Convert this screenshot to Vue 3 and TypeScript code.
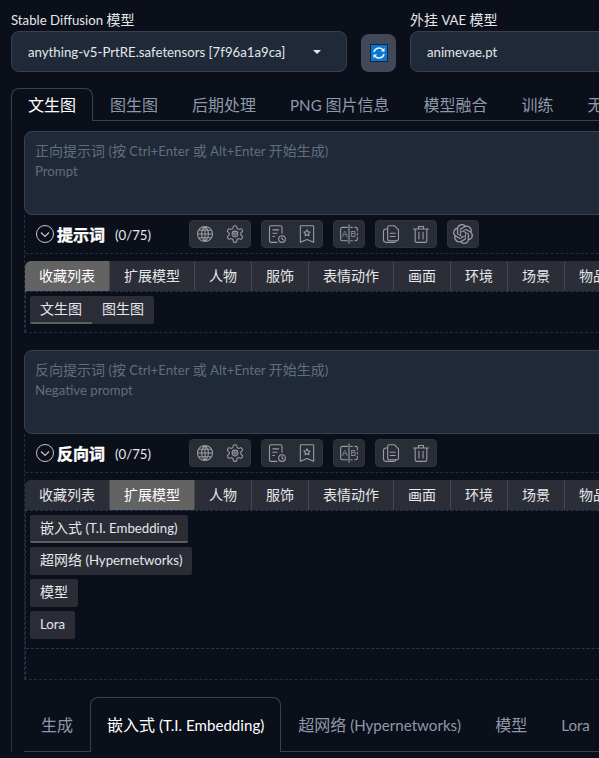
<template>
  <div class="page">
    <div class="top">
      <div class="field model">
        <label><Txt t="Stable Diffusion 模型" /></label>
        <div class="select">
          <span><Txt t="anything-v5-PrtRE.safetensors [7f96a1a9ca]" /></span>
          <i class="caret"></i>
        </div>
      </div>
      <button class="refresh">
        <svg width="18" height="18" viewBox="0 0 18 18">
          <rect x="0.5" y="0.5" width="17" height="17" fill="#0a77d6" stroke="#1b2430" />
          <path d="M4 8a5 5 0 0 1 8.6-2.4L14 7M14 10a5 5 0 0 1-8.6 2.4L4 11" fill="none" stroke="#e8f2fb" stroke-width="1.5" />
          <path d="M14.5 3.8v3.7h-3.7zM3.5 14.2v-3.7h3.7z" fill="#e8f2fb" />
        </svg>
      </button>
      <div class="field vae">
        <label><Txt t="外挂 VAE 模型" /></label>
        <div class="select"><span><Txt t="animevae.pt" /></span></div>
      </div>
    </div>

    <div class="main-tabs">
      <span v-for="(t, i) in mainTabs" :key="t" class="main-tab" :class="{ on: i === 0 }"><Txt :t="t" /></span>
    </div>

    <div class="panel">
      <section v-for="s in sections" :key="s.title" class="prompt">
        <div class="textbox">
          <p><Txt :t="s.hint" /></p>
          <p><Txt :t="s.placeholder" /></p>
        </div>
        <div class="extras">
          <div class="toolbar">
            <svg class="toggle" width="18" height="18" viewBox="0 0 18 18" fill="none" stroke="#c4c6ca" stroke-width="1">
              <circle cx="9" cy="9" r="8.5" />
              <path d="M5 7.5l4 4 4-4" stroke-width="1.2" />
            </svg>
            <strong>{{ s.title }}</strong>
            <span class="count"><Txt t="(0/75)" /></span>
            <div class="groups">
              <div v-for="(g, gi) in s.groups" :key="gi" class="group">
                <button v-for="name in g" :key="name" class="tool">
                  <svg width="20" height="20" viewBox="0 0 24 24" :fill="name === 'openai' ? '#9a9da3' : 'none'" :stroke="name === 'openai' ? 'none' : '#9a9da3'" stroke-width="1.3" stroke-linecap="round" stroke-linejoin="round">
                    <path :d="icons[name]" />
                    <template v-if="name === 'book'">
                      <text x="7" y="16" class="icon-letter">A</text>
                      <text x="17" y="16" class="icon-letter">B</text>
                    </template>
                  </svg>
                </button>
              </div>
            </div>
          </div>
          <div class="cats-wrap">
            <div class="cats">
              <span v-for="(c, i) in cats" :key="c" class="cat" :class="{ on: i === s.activeCat }">{{ c }}</span>
            </div>
            <div class="chips" :class="{ inline: s.inline, tall: !s.inline }">
              <span v-for="(c, i) in s.chips" :key="c" class="chip" :class="{ on: i === 0 }"><Txt :t="c" /></span>
              <div v-if="!s.inline" class="chip-end"></div>
            </div>
          </div>
        </div>
      </section>

      <div class="bottom-tabs">
        <span v-for="(t, i) in bottomTabs" :key="t" class="bottom-tab" :class="{ on: i === 1 }"><Txt :t="t" /></span>
      </div>
    </div>
  </div>
</template>

<script setup lang="ts">
import { h } from 'vue'

const Txt = (props: { t: string }) =>
  props.t.split(/([\x00-\x7f]+)/).filter(Boolean).map((run) =>
    /^[\x00-\x7f]/.test(run) ? h('span', { class: 'lat' }, run) : run,
  )
Txt.props = ['t']

const mainTabs = ['文生图', '图生图', '后期处理', 'PNG 图片信息', '模型融合', '训练', '无边界图像浏览']
const cats = ['收藏列表', '扩展模型', '人物', '服饰', '表情动作', '画面', '环境', '场景', '物品', '其他']
const bottomTabs = ['生成', '嵌入式 (T.I. Embedding)', '超网络 (Hypernetworks)', '模型', 'Lora']

const icons: Record<string, string> = {
  globe: 'M12 3a9 9 0 1 0 0 18a9 9 0 1 0 0-18M3 12h18M12 3c-5.400 4.500-5.400 13.500 0 18M12 3c5.400 4.500 5.400 13.500 0 18M12 3v18M4.300 7.500h15.400M4.300 16.500h15.400',
  gear: 'M12.22 2h-.44a2 2 0 0 0-2 2v.18a2 2 0 0 1-1 1.73l-.43.25a2 2 0 0 1-2 0l-.15-.08a2 2 0 0 0-2.73.73l-.22.38a2 2 0 0 0 .73 2.73l.15.1a2 2 0 0 1 1 1.72v.51a2 2 0 0 1-1 1.74l-.15.09a2 2 0 0 0-.73 2.73l.22.38a2 2 0 0 0 2.73.73l.15-.08a2 2 0 0 1 2 0l.43.25a2 2 0 0 1 1 1.73V20a2 2 0 0 0 2 2h.44a2 2 0 0 0 2-2v-.18a2 2 0 0 1 1-1.73l.43-.25a2 2 0 0 1 2 0l.15.08a2 2 0 0 0 2.73-.73l.22-.39a2 2 0 0 0-.73-2.73l-.15-.08a2 2 0 0 1-1-1.74v-.5a2 2 0 0 1 1-1.74l.15-.09a2 2 0 0 0 .73-2.73l-.22-.38a2 2 0 0 0-2.73-.73l-.15.08a2 2 0 0 1-2 0l-.43-.25a2 2 0 0 1-1-1.73V4a2 2 0 0 0-2-2zM12 8.500a3.500 3.500 0 1 0 0 7a3.500 3.500 0 1 0 0-7M12 10.500a1.500 1.500 0 1 0 0 3a1.500 1.500 0 1 0 0-3',
  history: 'M18 11V4a2 2 0 0 0-2-2H5a2 2 0 0 0-2 2v16a2 2 0 0 0 2 2h7M7 7h7M7 11h5M7 15h2M14 18a4 4 0 1 0 8 0a4 4 0 1 0-8 0M18 16v2l1.500 1',
  bookmark: 'M5 2h14a1 1 0 0 1 1 1v19l-8-3.500L4 22V3a1 1 0 0 1 1-1zM12 7l1.200 2.300 2.500.4-1.800 1.800.4 2.500-2.300-1.200-2.300 1.200.4-2.500-1.800-1.800 2.500-.4z',
  book: 'M12 1v22M10 4H4a2 2 0 0 0-2 2v12a2 2 0 0 0 2 2h6M14 4h2M19 4h1a2 2 0 0 1 2 2v2M22 11v2M22 16v2a2 2 0 0 1-2 2h-1M16 20h-2',
  paste: 'M10 2h6l5 5v11a2 2 0 0 1-2 2H10a2 2 0 0 1-2-2V4a2 2 0 0 1 2-2zM8 6H6a3 3 0 0 0-3 3v10a3 3 0 0 0 3 3h10a3 3 0 0 0 2-1M11 11h6M11 15h6',
  trash: 'M3 6h18M9 6V3h6v3M5 6v14a2 2 0 0 0 2 2h10a2 2 0 0 0 2-2V6M9.500 10v8M14.500 10v8',
  openai: 'M22.2819 9.8211a5.9847 5.9847 0 0 0-.5157-4.9108 6.0462 6.0462 0 0 0-6.5098-2.9A6.0651 6.0651 0 0 0 4.9807 4.1818a5.9847 5.9847 0 0 0-3.9977 2.9 6.0462 6.0462 0 0 0 .7427 7.0966 5.98 5.98 0 0 0 .511 4.9107 6.051 6.051 0 0 0 6.5146 2.9001A5.9847 5.9847 0 0 0 13.2599 24a6.0557 6.0557 0 0 0 5.7718-4.2058 5.9894 5.9894 0 0 0 3.9977-2.9001 6.0557 6.0557 0 0 0-.7475-7.0729zm-9.022 12.6081a4.4755 4.4755 0 0 1-2.8764-1.0408l.1419-.0804 4.7783-2.7582a.7948.7948 0 0 0 .3927-.6813v-6.7369l2.02 1.1686a.071.071 0 0 1 .038.052v5.5826a4.504 4.504 0 0 1-4.4945 4.4944zm-9.6607-4.1254a4.4708 4.4708 0 0 1-.5346-3.0137l.142.0852 4.783 2.7582a.7712.7712 0 0 0 .7806 0l5.8428-3.3685v2.3324a.0804.0804 0 0 1-.0332.0615L9.74 19.9502a4.4992 4.4992 0 0 1-6.1408-1.6464zM2.3408 7.8956a4.485 4.485 0 0 1 2.3655-1.9728V11.6a.7664.7664 0 0 0 .3879.6765l5.8144 3.3543-2.0201 1.1685a.0757.0757 0 0 1-.071 0l-4.8303-2.7865A4.504 4.504 0 0 1 2.3408 7.872zm16.5963 3.8558L13.1038 8.364 15.1192 7.2a.0757.0757 0 0 1 .071 0l4.8303 2.7913a4.4944 4.4944 0 0 1-.6765 8.1042v-5.6772a.79.79 0 0 0-.407-.667zm2.0107-3.0231l-.142-.0852-4.7735-2.7818a.7759.7759 0 0 0-.7854 0L9.409 9.2297V6.8974a.0662.0662 0 0 1 .0284-.0615l4.8303-2.7866a4.4992 4.4992 0 0 1 6.6802 4.66zM8.3065 12.863l-2.02-1.1638a.0804.0804 0 0 1-.038-.0567V6.0742a4.4992 4.4992 0 0 1 7.3757-3.4537l-.142.0805L8.704 5.459a.7948.7948 0 0 0-.3927.6813zm1.0976-2.3654l2.602-1.4998 2.6069 1.4998v2.9994l-2.5974 1.4997-2.6067-1.4997Z',
}

const baseGroups = [['globe', 'gear'], ['history', 'bookmark'], ['book'], ['paste', 'trash']]

const sections = [
  {
    title: '提示词',
    hint: '正向提示词 (按 Ctrl+Enter 或 Alt+Enter 开始生成)',
    placeholder: 'Prompt',
    groups: [...baseGroups, ['openai']],
    activeCat: 0,
    inline: true,
    chips: ['文生图', '图生图'],
  },
  {
    title: '反向词',
    hint: '反向提示词 (按 Ctrl+Enter 或 Alt+Enter 开始生成)',
    placeholder: 'Negative prompt',
    groups: baseGroups,
    activeCat: 1,
    inline: false,
    chips: ['嵌入式 (T.I. Embedding)', '超网络 (Hypernetworks)', '模型', 'Lora'],
  },
]
</script>

<style>
html, body { margin: 0; background: #0b0f19; }
.lat { font-size: 0.945em; }
</style>

<style scoped>
.page {
  width: 599px; height: 758px; overflow: hidden; background: #0b0f19; box-sizing: border-box;
  font-family: Lato, "Noto Sans CJK SC", sans-serif; font-size: 14px; color: #e5e7eb;
}
.top { display: flex; align-items: flex-end; gap: 14px; padding: 11px 0 0 11px; width: 900px; }
.field label { display: block; height: 20px; line-height: 18px; font-size: 14px; color: #e5e7eb; }
.model { width: 336px; flex: none; }
.vae { width: 336px; flex: none; }
.select {
  height: 41px; box-sizing: border-box; display: flex; align-items: center; justify-content: space-between;
  padding: 0 25px 0 16px; background: #1f2937; border: 1px solid #374151; border-radius: 8px; color: #e5e7eb;
}
.caret { width: 0; height: 0; border-left: 4px solid transparent; border-right: 4px solid transparent; border-top: 4px solid #e5e7eb; }
.refresh {
  width: 35px; height: 38px; flex: none; padding: 0; border: none; border-radius: 8px; background: #414958;
  display: flex; align-items: center; justify-content: center;
}

.main-tabs { display: flex; margin: 16px 0 0 11px; height: 32px; width: 900px; border-bottom: 1px solid #374151; }
.main-tab { box-sizing: border-box; padding: 0 16px; height: 33px; font-size: 16px; line-height: 32px; color: #8d99ab; white-space: nowrap; border: 1px solid transparent; border-bottom: none; }
.main-tab.on { color: #fff; background: #0b0f19; border-color: #374151; border-radius: 8px 8px 0 0; }

.panel { margin-left: 11px; border-left: 1px solid #2a303c; padding: 10px 0 0 12px; width: 900px; }
.prompt + .prompt { margin-top: 17px; }
.textbox {
  height: 84px; box-sizing: border-box; padding: 9px 10px; background: #1f2937; border: 1px solid #374151; border-radius: 8px;
  color: #616d80; line-height: 20px;
}
.textbox p { margin: 0; }
.extras { border-left: 1px dashed #1f2e40; border-bottom: 1px dashed #1f2e40; }
.toolbar { display: flex; align-items: center; padding: 5px 0 5px 11px; border-bottom: 1px dashed #1f2e40; }
.toggle { flex: none; }
.toolbar strong { margin-left: 3px; font-size: 16px; font-weight: 700; color: #fff; width: 48px; white-space: nowrap; -webkit-text-stroke: 0.4px #fff; }
.count { margin-left: 10px; width: 74px; flex: none; color: #e5e7eb; }
.groups { display: flex; gap: 10px; }
.group { display: flex; height: 28px; background: #292d36; border: 1px solid #2f333c; box-sizing: border-box; border-radius: 4px; }
.tool { width: 30px; padding: 0; border: none; background: none; display: flex; align-items: center; justify-content: center; }
.icon-letter { font: 10px "Liberation Sans", sans-serif; fill: #9a9da3; stroke: none; text-anchor: middle; }

.cats-wrap { padding-top: 7px; }
.cats { display: flex; height: 30px; }
.cat { flex: none; padding: 0 14px; line-height: 30px; background: #2b2e36; color: #e5e7eb; border-right: 1px solid #46484d; white-space: nowrap; }
.cat:first-child { border-radius: 6px 0 0 0; }
.cat.on { background: #636363; color: #fff; }

.chips { border-top: 1px dashed #1f3a52; border-left: 1px dashed #1f3a52; padding: 4px 4px 8px; display: flex; }
.chips.tall { flex-direction: column; align-items: flex-start; gap: 4px; padding-bottom: 0; }
.chip { height: 28px; box-sizing: border-box; padding: 0 10px; line-height: 26px; background: #2a2d35; color: #e5e7eb; border-radius: 2px; white-space: nowrap; }
.chip.on { border-bottom: 2px solid #5d5e60; }
.chips.inline .chip:first-child { border-radius: 2px 0 0 2px; }
.chips.inline .chip + .chip { border-radius: 0 2px 2px 0; }
.chip-end { align-self: stretch; margin: 5px 0 0 -4px; height: 30px; border-top: 1px dashed #1f3a52; }

.bottom-tabs { display: flex; margin-top: 17px; height: 54px; border-bottom: 1px solid #374151; }
.bottom-tab { box-sizing: border-box; padding: 0 16px; height: 55px; font-size: 16px; line-height: 53px; color: #8d99ab; white-space: nowrap; border: 1px solid transparent; border-bottom: none; }
.bottom-tab.on { color: #fff; background: #0b0f19; border-color: #374151; border-radius: 8px 8px 0 0; }
</style>
